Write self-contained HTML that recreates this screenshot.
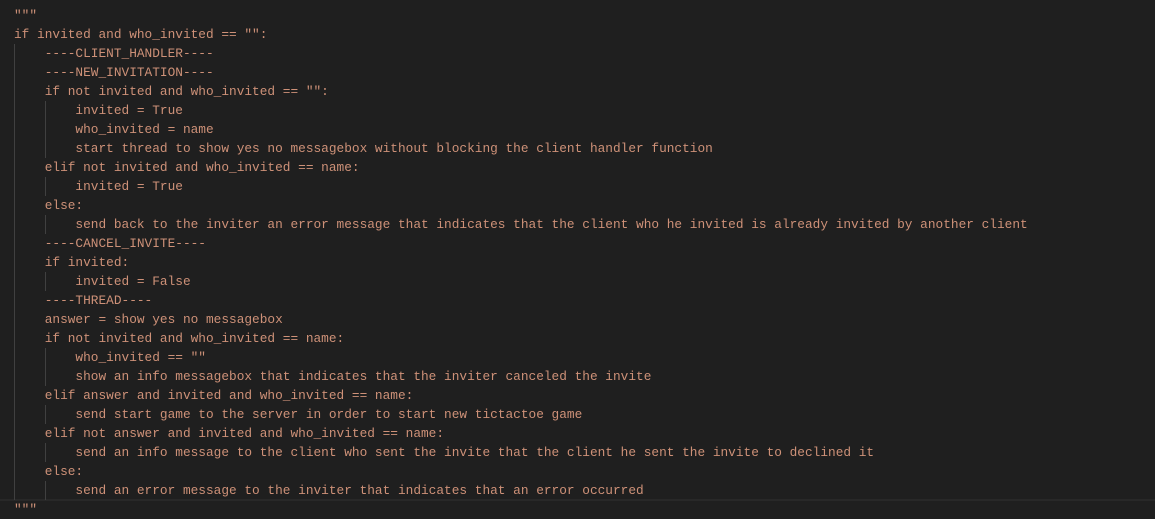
<!DOCTYPE html>
<html><head><style>
html,body{margin:0;padding:0;background:#1f1f1f;width:1155px;height:517px;overflow:hidden}
#ed{position:absolute;left:14px;top:6px;font-family:"Liberation Mono",monospace;font-size:12.8px;color:#ce9178}
.l{height:19px;line-height:19px;position:relative;white-space:pre}
.g{position:absolute;top:0;width:1px;height:19px;background:#404040}
.g1{left:0}.g2{left:30.5px}
#hl{position:absolute;left:0;top:499px;width:1155px;height:2px;background:#282828}
</style></head><body>
<div id="hl"></div>
<div id="ed">
<div class="l">"""</div>
<div class="l">if invited and who_invited == "":</div>
<div class="l"><span class="g g1"></span>    ----CLIENT_HANDLER----</div>
<div class="l"><span class="g g1"></span>    ----NEW_INVITATION----</div>
<div class="l"><span class="g g1"></span>    if not invited and who_invited == "":</div>
<div class="l"><span class="g g1"></span><span class="g g2"></span>        invited = True</div>
<div class="l"><span class="g g1"></span><span class="g g2"></span>        who_invited = name</div>
<div class="l"><span class="g g1"></span><span class="g g2"></span>        start thread to show yes no messagebox without blocking the client handler function</div>
<div class="l"><span class="g g1"></span>    elif not invited and who_invited == name:</div>
<div class="l"><span class="g g1"></span><span class="g g2"></span>        invited = True</div>
<div class="l"><span class="g g1"></span>    else:</div>
<div class="l"><span class="g g1"></span><span class="g g2"></span>        send back to the inviter an error message that indicates that the client who he invited is already invited by another client</div>
<div class="l"><span class="g g1"></span>    ----CANCEL_INVITE----</div>
<div class="l"><span class="g g1"></span>    if invited:</div>
<div class="l"><span class="g g1"></span><span class="g g2"></span>        invited = False</div>
<div class="l"><span class="g g1"></span>    ----THREAD----</div>
<div class="l"><span class="g g1"></span>    answer = show yes no messagebox</div>
<div class="l"><span class="g g1"></span>    if not invited and who_invited == name:</div>
<div class="l"><span class="g g1"></span><span class="g g2"></span>        who_invited == ""</div>
<div class="l"><span class="g g1"></span><span class="g g2"></span>        show an info messagebox that indicates that the inviter canceled the invite</div>
<div class="l"><span class="g g1"></span>    elif answer and invited and who_invited == name:</div>
<div class="l"><span class="g g1"></span><span class="g g2"></span>        send start game to the server in order to start new tictactoe game</div>
<div class="l"><span class="g g1"></span>    elif not answer and invited and who_invited == name:</div>
<div class="l"><span class="g g1"></span><span class="g g2"></span>        send an info message to the client who sent the invite that the client he sent the invite to declined it</div>
<div class="l"><span class="g g1"></span>    else:</div>
<div class="l"><span class="g g1"></span><span class="g g2"></span>        send an error message to the inviter that indicates that an error occurred</div>
<div class="l">"""</div>
</div>
</body></html>
